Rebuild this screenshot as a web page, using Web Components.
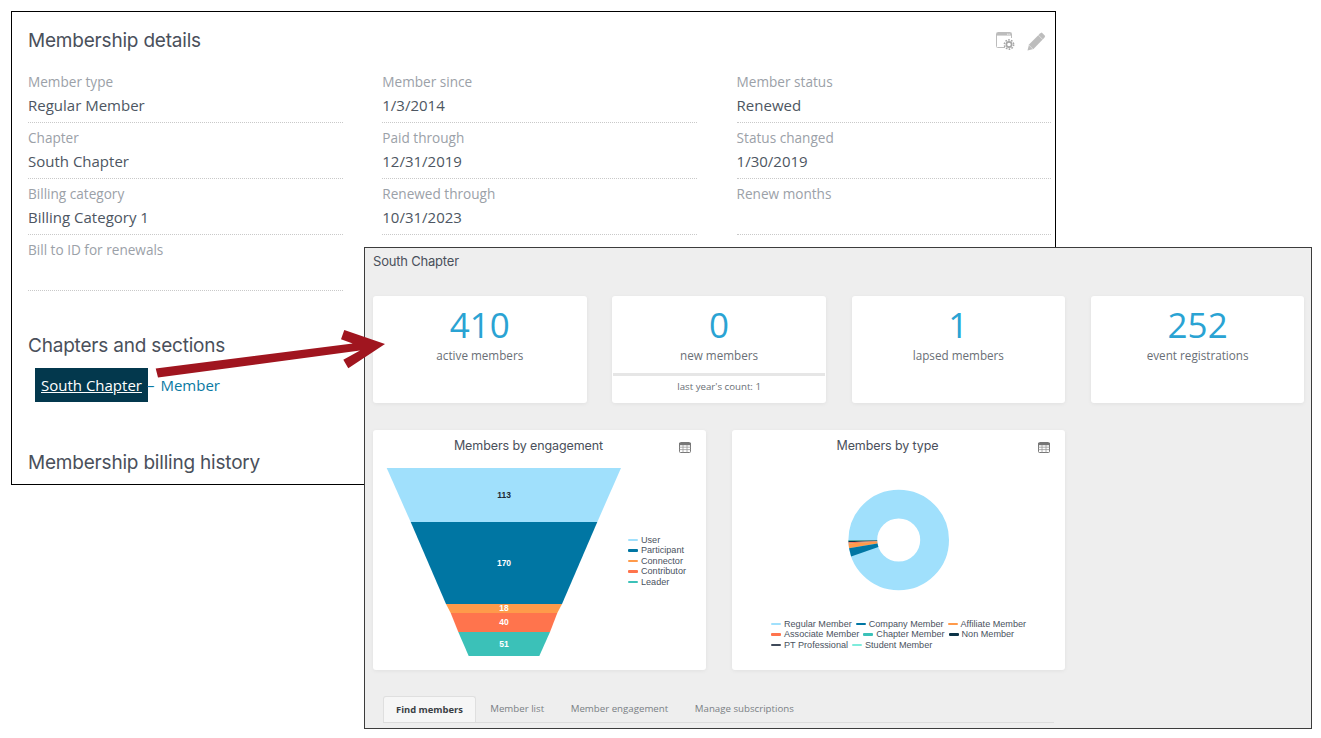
<!DOCTYPE html>
<html lang="en">
<head>
<meta charset="utf-8">
<title>Membership</title>
<style>
  html, body { margin: 0; background: #fff; }
  body { width: 1321px; height: 738px; overflow: hidden; font-family: "Open Sans", sans-serif; }
  .desk { position: relative; width: 1321px; height: 738px; }
</style>
</head>
<body>
<div class="desk">
  <member-panel>
    <section-title slot="title">Membership details</section-title>
    <detail-field label="Member type">Regular Member</detail-field>
    <detail-field label="Member since">1/3/2014</detail-field>
    <detail-field label="Member status">Renewed</detail-field>
    <detail-field label="Chapter">South Chapter</detail-field>
    <detail-field label="Paid through">12/31/2019</detail-field>
    <detail-field label="Status changed">1/30/2019</detail-field>
    <detail-field label="Billing category">Billing Category 1</detail-field>
    <detail-field label="Renewed through">10/31/2023</detail-field>
    <detail-field label="Renew months"></detail-field>
    <detail-field label="Bill to ID for renewals"></detail-field>
  </member-panel>

  <chapter-dashboard>
    <stat-card number="410" caption="active members"></stat-card>
    <stat-card number="0" caption="new members" note="last year's count: 1"></stat-card>
    <stat-card number="1" caption="lapsed members"></stat-card>
    <stat-card number="252" caption="event registrations"></stat-card>
    <chart-card slot="charts" heading="Members by engagement"><funnel-chart></funnel-chart></chart-card>
    <chart-card slot="charts" heading="Members by type"><donut-chart></donut-chart></chart-card>
    <tab-strip slot="tabs"></tab-strip>
  </chapter-dashboard>

  <callout-arrow></callout-arrow>
</div>

<script>
const TITLE_FONT = '"Inter", "Lato", sans-serif';
const CHART_COLORS = {
  sky: '#a0e0fc', blue: '#0076a3', orange: '#ff9a4a', coral: '#ff744d',
  teal: '#3bc1b8', navy: '#0c3347', slate: '#3f4a5a', mint: '#7eecdc'
};

class SectionTitle extends HTMLElement {
  constructor() {
    super();
    this.attachShadow({ mode: 'open' }).innerHTML = `
      <style>
        :host { display: block; font: 420 19px/24px ${TITLE_FONT}; color: #4a505b; letter-spacing: -0.2px; }
      </style>
      <slot></slot>`;
  }
}

class DetailField extends HTMLElement {
  connectedCallback() {
    const label = this.getAttribute('label');
    this.attachShadow({ mode: 'open' }).innerHTML = `
      <style>
        :host { display: block; height: 50px; margin-bottom: 5px; border-bottom: 1px dotted #c9c9c9; font-family: "Open Sans", sans-serif; }
        .label { font-size: 13.6px; line-height: 20px; height: 21px; color: #9ba1a8; }
        .value { font-size: 15px; line-height: 24px; color: #4d5662; }
      </style>
      <div class="label">${label}</div>
      <div class="value"><slot></slot></div>`;
  }
}

class MemberPanel extends HTMLElement {
  constructor() {
    super();
    this.attachShadow({ mode: 'open' }).innerHTML = `
      <style>
        :host {
          position: absolute; left: 11px; top: 11px; width: 1043px; height: 472px;
          border: 1px solid #000; background: #fff; display: block;
          font-family: "Open Sans", sans-serif; overflow: hidden;
        }
        .wrap { padding: 17px 4px 0 16px; }
        .head { display: flex; justify-content: space-between; align-items: flex-start; height: 43px; }
        .tools { display: flex; gap: 12px; margin: 3px 5px 0 0; }
        .grid { display: grid; grid-template-columns: repeat(3, 314.5px); column-gap: 39.8px; }
        .chapters { margin-top: 38px; }
        .membership { display: flex; align-items: center; margin: 10px 0 0 7px; font-size: 15px; color: #0a7aa3; }
        .badge { background: #03384d; color: #fff; height: 34px; line-height: 34px; padding: 0 6px; text-decoration: underline; }
        .sep { margin: 0 6px 0 -1px; }
        .billing { margin-top: 49px; }
      </style>
      <div class="wrap">
        <div class="head">
          <slot name="title"></slot>
          <div class="tools">
            <svg width="19" height="19" viewBox="0 0 19 19" fill="none">
              <path d="M9 15.5H1.5a1 1 0 0 1-1-1V1.5a1 1 0 0 1 1-1h13a1 1 0 0 1 1 1V6" stroke="#bcbcbc"/>
              <path d="M1 1h14v2.6H1z" fill="#bcbcbc"/>
              <path d="M11 2.2h1.6M13.2 2.2h1" stroke="#fff" stroke-width=".8"/>
              <circle cx="13" cy="12.5" r="2.6" stroke="#a6a6a6" stroke-width="1.6"/>
              <circle cx="13" cy="12.5" r="4.6" stroke="#a6a6a6" stroke-width="1.6" stroke-dasharray="1.6 1.3"/>
            </svg>
            <svg width="19" height="19" viewBox="0 0 19 19">
              <path d="M.5 18.5 2 12.5 13 1.5 14.8.5 18.2 3.9 17.4 5.7 6.5 17Z" fill="#bdbdbd"/>
              <path d="M11.4 3.2 15.8 7.6M1.8 13 6 17.2" stroke="#fff" stroke-width=".7" opacity=".7"/>
            </svg>
          </div>
        </div>
        <div class="grid"><slot></slot></div>
        <section-title class="chapters">Chapters and sections</section-title>
        <div class="membership"><span class="badge">South Chapter</span><span class="sep">–</span><span>Member</span></div>
        <section-title class="billing">Membership billing history</section-title>
      </div>`;
  }
}

class StatCard extends HTMLElement {
  connectedCallback() {
    const note = this.getAttribute('note');
    this.attachShadow({ mode: 'open' }).innerHTML = `
      <style>
        :host {
          display: flex; flex-direction: column; background: #fff; border-radius: 3px;
          box-shadow: 0 1px 4px rgba(0,0,0,.06); height: 107px; text-align: center;
          font-family: "Open Sans", sans-serif;
        }
        .number { font-size: 35px; line-height: 40px; margin-top: 9px; color: #2aa3d3; }
        .caption { font-size: 11.7px; line-height: 17px; margin-top: 2px; color: #6a6f76; }
        .note { margin: 9px 1px 0; border-top: 3px solid #e6e6e6; font-size: 9.7px; line-height: 22px; color: #6a6f76; }
      </style>
      <div class="number">${this.getAttribute('number')}</div>
      <div class="caption">${this.getAttribute('caption')}</div>
      ${note ? `<div class="note">${note}</div>` : ''}`;
  }
}

class ChartCard extends HTMLElement {
  connectedCallback() {
    this.attachShadow({ mode: 'open' }).innerHTML = `
      <style>
        :host {
          display: block; position: relative; background: #fff; border-radius: 3px; height: 240px;
          box-shadow: 0 1px 4px rgba(0,0,0,.06);
        }
        .title { height: 38px; text-align: center; padding: 7px 22px 0 0; box-sizing: border-box; font: 420 12.5px/18px ${TITLE_FONT}; color: #4a505b; letter-spacing: -0.1px; }
        svg.grid-icon { position: absolute; right: 15px; top: 12px; }
      </style>
      <div class="title">${this.getAttribute('heading')}</div>
      <svg class="grid-icon" width="12" height="11" viewBox="0 0 12 11" fill="none">
        <rect x=".5" y=".5" width="11" height="10" rx="1" stroke="#777"/>
        <path d="M0 1h12v2.2H0z" fill="#777"/>
        <path d="M.5 5.2h11M.5 7.6h11M4 3v7.5M8 3v7.5" stroke="#999" stroke-width=".8"/>
      </svg>
      <slot></slot>`;
  }
}

class ChartLegend extends HTMLElement {
  set items(list) {
    this.shadowRoot.querySelector('.list').innerHTML = list.map(([text, color]) =>
      `<span class="item"><i style="background:${color}"></i>${text}</span>`).join('');
  }
  constructor() {
    super();
    this.attachShadow({ mode: 'open' }).innerHTML = `
      <style>
        :host { display: block; font: 9.1px/10.4px "Liberation Sans", Arial, sans-serif; color: #4a5260; }
        .list { display: flex; flex-wrap: wrap; column-gap: 4px; }
        :host([stacked]) .list { flex-direction: column; }
        .item { display: inline-flex; align-items: center; white-space: nowrap; }
        i { width: 10px; height: 2.5px; margin-right: 3px; border-radius: 1px; }
      </style>
      <div class="list"></div>`;
  }
}

class FunnelChart extends HTMLElement {
  connectedCallback() {
    // each row: top y, bottom y, x edges at top, x edges at bottom, fill, label, label colour, label y
    const rows = [
      [0, 54, 13.7, 248, 37.7, 224.3, CHART_COLORS.sky, '113', '#1d2a33', 30],
      [54, 136, 37.7, 224.3, 73, 189, CHART_COLORS.blue, '170', '#fff', 98],
      [136, 145, 73, 189, 77.7, 184.3, CHART_COLORS.orange, '18', '#fff', 143],
      [145, 164, 77.7, 184.3, 85.3, 177, CHART_COLORS.coral, '40', '#fff', 157],
      [164, 188, 85.3, 177, 95.7, 166.3, CHART_COLORS.teal, '51', '#fff', 179]
    ];
    const shapes = rows.map(([y0, y1, a, b, c, d, fill, text, ink, ty]) => `
      <polygon points="${a},${y0} ${b},${y0} ${d},${y1} ${c},${y1}" fill="${fill}"/>
      <text x="131" y="${ty}" fill="${ink}">${text}</text>`).join('');
    this.attachShadow({ mode: 'open' }).innerHTML = `
      <style>
        :host { display: flex; align-items: flex-start; }
        svg { display: block; flex: none; }
        text { font: bold 8.5px "Liberation Sans", Arial, sans-serif; text-anchor: middle; }
        chart-legend { margin-top: 67px; }
      </style>
      <svg width="255" height="190" viewBox="0 0 255 190">${shapes}</svg>
      <chart-legend stacked></chart-legend>`;
    this.shadowRoot.querySelector('chart-legend').items = [
      ['User', CHART_COLORS.sky], ['Participant', CHART_COLORS.blue], ['Connector', CHART_COLORS.orange],
      ['Contributor', CHART_COLORS.coral], ['Leader', CHART_COLORS.teal]
    ];
  }
}

class DonutChart extends HTMLElement {
  wedge(from, to) {
    // angles in degrees below the west axis
    const cx = 166.7, cy = 72, R = 50.3, r = 21.5;
    const pt = (rad, deg) => {
      const t = deg * Math.PI / 180;
      return `${(cx - rad * Math.cos(t)).toFixed(2)},${(cy + rad * Math.sin(t)).toFixed(2)}`;
    };
    return `M${pt(R, from)}L${pt(R, to)}L${pt(r, to)}L${pt(r, from)}Z`;
  }
  connectedCallback() {
    const slices = [
      [0, 1, '#5fb8a8'], [1, 2.5, CHART_COLORS.navy], [2.5, 4, CHART_COLORS.coral],
      [4, 9.5, CHART_COLORS.orange], [9.5, 19, CHART_COLORS.blue]
    ];
    this.attachShadow({ mode: 'open' }).innerHTML = `
      <style>
        :host { display: block; }
        svg { display: block; }
        chart-legend { width: 262px; margin: 7px 0 0 39px; }
      </style>
      <svg width="333" height="144" viewBox="0 0 333 144">
        <circle cx="166.7" cy="72" r="35.9" fill="none" stroke="${CHART_COLORS.sky}" stroke-width="28.8"/>
        ${slices.map(([a, b, c]) => `<path d="${this.wedge(a, b)}" fill="${c}"/>`).join('')}
      </svg>
      <chart-legend></chart-legend>`;
    this.shadowRoot.querySelector('chart-legend').items = [
      ['Regular Member', CHART_COLORS.sky], ['Company Member', CHART_COLORS.blue], ['Affiliate Member', CHART_COLORS.orange],
      ['Associate Member', CHART_COLORS.coral], ['Chapter Member', CHART_COLORS.teal], ['Non Member', CHART_COLORS.navy],
      ['PT Professional', CHART_COLORS.slate], ['Student Member', CHART_COLORS.mint]
    ];
  }
}

class TabStrip extends HTMLElement {
  constructor() {
    super();
    this.attachShadow({ mode: 'open' }).innerHTML = `
      <style>
        :host { display: flex; height: 26px; width: 671px; border-bottom: 1px solid #dcdcdc; font: 9.7px/26px "Open Sans", sans-serif; color: #7a7f85; }
        span { padding: 0 13.3px; white-space: nowrap; }
        .on {
          font-weight: 700; font-size: 9.4px; color: #3a3f45; background: #f6f6f6; padding: 0 12px; margin-right: 1px;
          border: 1px solid #dfdfdf; border-bottom: 0; border-radius: 3px 3px 0 0; line-height: 25px;
        }
      </style>
      <span class="on">Find members</span><span>Member list</span><span>Member engagement</span><span>Manage subscriptions</span>`;
  }
}

class ChapterDashboard extends HTMLElement {
  constructor() {
    super();
    this.attachShadow({ mode: 'open' }).innerHTML = `
      <style>
        :host {
          position: absolute; left: 364px; top: 247px; width: 946px; height: 480px; display: block;
          border: 1px solid #3c3c3c; background: #eee; overflow: hidden;
        }
        .wrap { padding: 5px 7px 0 8px; }
        .name { font: 420 13px/17px ${TITLE_FONT}; color: #4a505b; letter-spacing: -0.2px; margin-bottom: 26px; }
        .stats { display: grid; grid-template-columns: repeat(4, 213.6px); column-gap: 25.7px; }
        .charts { display: grid; grid-template-columns: repeat(2, 333px); column-gap: 26px; margin-top: 27px; }
        .tabs { margin: 26px 0 0 10px; }
      </style>
      <div class="wrap">
        <div class="name">South Chapter</div>
        <div class="stats"><slot></slot></div>
        <div class="charts"><slot name="charts"></slot></div>
        <div class="tabs"><slot name="tabs"></slot></div>
      </div>`;
  }
}

class CalloutArrow extends HTMLElement {
  constructor() {
    super();
    this.attachShadow({ mode: 'open' }).innerHTML = `
      <style>
        :host { position: absolute; left: 150px; top: 325px; width: 240px; height: 60px; display: block; pointer-events: none; }
        svg { display: block; }
      </style>
      <svg width="240" height="60" viewBox="150 325 240 60">
        <polygon fill="#a0151f" points="155.7,368.5 352.7,343.5 341,339.3 344.3,330 385,344 348.3,368.3 343.3,359.7 360,350.5 158,377.5"/>
      </svg>`;
  }
}

customElements.define('section-title', SectionTitle);
customElements.define('detail-field', DetailField);
customElements.define('member-panel', MemberPanel);
customElements.define('stat-card', StatCard);
customElements.define('chart-card', ChartCard);
customElements.define('chart-legend', ChartLegend);
customElements.define('funnel-chart', FunnelChart);
customElements.define('donut-chart', DonutChart);
customElements.define('tab-strip', TabStrip);
customElements.define('chapter-dashboard', ChapterDashboard);
customElements.define('callout-arrow', CalloutArrow);
</script>
</body>
</html>
